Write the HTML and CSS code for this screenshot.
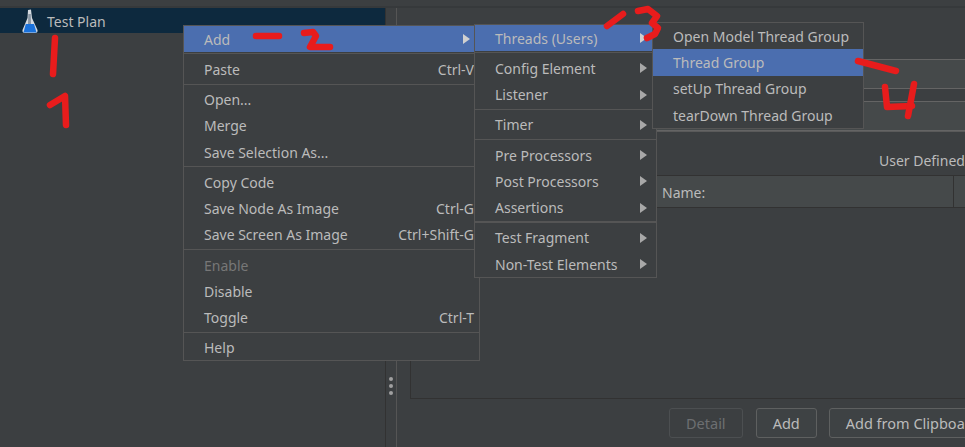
FILE: index.html
```html
<!DOCTYPE html>
<html lang="en">
<head>
  <meta charset="UTF-8">
  <title>Test Plan</title>
  <link rel="stylesheet" href="styles.css">
</head>
<body>

  <div class="topStrip"></div>

  <div class="app">
    <div class="treePane">
      <div class="treeRow">
        <svg class="flask" width="16" height="24" viewBox="0 0 16 24">
          <path d="M6 1 L9 0.5 L10 9 L15.5 21 Q16 24 13 24 L3 24 Q0 24 0.5 21 L5.5 9 Z" fill="#d5dae0"/>
          <path d="M3.8 15 L12 15 L14.5 23.5 L1.5 23.5 Z" fill="#1a72dc"/>
          <path d="M6.3 5 L8.8 5 L9 15 L6 15 Z" fill="#8a96a3"/>
        </svg>
        <span>Test Plan</span>
      </div>
    </div>

    <div class="splitter">
      <span class="dot"></span>
      <span class="dot"></span>
      <span class="dot"></span>
    </div>

    <div class="mainPane">
      <div class="fieldRow"></div>
      <div class="fieldRow second"></div>
      <div class="sectionLine"></div>
      <div class="tableBox">
        <div class="tableTitle">User Defined Variables</div>
        <div class="tableHead">
          <div class="nameCell">Name:</div>
          <div class="valueCell"></div>
        </div>
      </div>
      <div class="buttons">
        <button class="btn disabled">Detail</button>
        <button class="btn">Add</button>
        <button class="btn">Add from Clipboard</button>
      </div>
    </div>
  </div>

  <!-- Kontextmenue -->
  <div class="menu menuMain">
    <div class="item active"><span>Add</span><i class="arrow"></i></div>
    <div class="sep"></div>
    <div class="item"><span>Paste</span><em>Ctrl-V</em></div>
    <div class="sep"></div>
    <div class="item"><span>Open...</span></div>
    <div class="item"><span>Merge</span></div>
    <div class="item"><span>Save Selection As...</span></div>
    <div class="sep"></div>
    <div class="item"><span>Copy Code</span></div>
    <div class="item"><span>Save Node As Image</span><em>Ctrl-G</em></div>
    <div class="item"><span>Save Screen As Image</span><em>Ctrl+Shift-G</em></div>
    <div class="sep"></div>
    <div class="item off"><span>Enable</span></div>
    <div class="item"><span>Disable</span></div>
    <div class="item"><span>Toggle</span><em>Ctrl-T</em></div>
    <div class="sep"></div>
    <div class="item"><span>Help</span></div>
  </div>

  <div class="menu menuAdd">
    <div class="item active"><span>Threads (Users)</span><i class="arrow"></i></div>
    <div class="sep"></div>
    <div class="item"><span>Config Element</span><i class="arrow"></i></div>
    <div class="item"><span>Listener</span><i class="arrow"></i></div>
    <div class="sep"></div>
    <div class="item"><span>Timer</span><i class="arrow"></i></div>
    <div class="sep"></div>
    <div class="item"><span>Pre Processors</span><i class="arrow"></i></div>
    <div class="item"><span>Post Processors</span><i class="arrow"></i></div>
    <div class="item"><span>Assertions</span><i class="arrow"></i></div>
    <div class="sep thick"></div>
    <div class="item"><span>Test Fragment</span><i class="arrow"></i></div>
    <div class="item"><span>Non-Test Elements</span><i class="arrow"></i></div>
  </div>

  <div class="menu menuThreads">
    <div class="item"><span>Open Model Thread Group</span></div>
    <div class="item active"><span>Thread Group</span></div>
    <div class="item"><span>setUp Thread Group</span></div>
    <div class="item"><span>tearDown Thread Group</span></div>
  </div>

  <!-- rote Markierungen -->
  <svg class="marks" width="965" height="447" viewBox="0 0 965 447">
    <path d="M55 38 L53 74"/>
    <path d="M50 105 L65 96 L66 125"/>
    <path d="M256 36 L279 36"/>
    <path d="M304 33 L313 32 L316 36 L310 47 L330 47"/>
    <path d="M607 26 L623 14"/>
    <path d="M638 11 L648 9 L657 16 L652 23 L658 28 L655 34 L647 38"/>
    <path d="M858 61 L896 71"/>
    <path d="M885 87 L887 107 L912 106"/>
    <path d="M914 84 L908 116"/>
  </svg>

</body>
</html>
```

FILE: styles.css
```css
* {
  box-sizing: border-box;
}
html, body {
  margin: 0;
  height: 100%;
  overflow: hidden;
}
body {
  position: relative;
  background-color: #3c3f41;
  color: #bbbbbb;
  font-family: "Noto Sans", Arial, sans-serif;
  font-size: 14px;
}
.topStrip {
  height: 8px;
  border-bottom: 2px solid #36393b;
}
.app {
  display: flex;
  height: 439px;
}
.treePane {
  width: 385px;
}
.treeRow {
  display: flex;
  align-items: center;
  gap: 9px;
  height: 25px;
  padding: 1px 0 0 22px;
  background-color: #0d293e;
}
.flask {
  flex: none;
}
.splitter {
  display: flex;
  flex-direction: column;
  justify-content: flex-end;
  align-items: center;
  gap: 3px;
  width: 12px;
  padding-bottom: 52px;
  border-left: 1px solid #323232;
  border-right: 1px solid #555555;
}
.dot {
  width: 4px;
  height: 4px;
  border-radius: 50%;
  background-color: #a0a0a0;
}
.mainPane {
  flex: 1;
  min-width: 0;
  display: flex;
  flex-direction: column;
  padding: 51px 0 0 13px;
  overflow: hidden;
}
.fieldRow {
  height: 30px;
  margin-left: 200px;
  background-color: #45494a;
  border-top: 1px solid #646464;
  border-bottom: 1px solid #646464;
}
.fieldRow.second {
  margin-top: 12px;
}
.sectionLine {
  height: 1px;
  margin-top: -1px;
}
.tableBox {
  height: 268px;
  width: 700px;
  border-left: 1px solid #323232;
  border-bottom: 1px solid #323232;
  border-top: 1px solid #5a5a5a;
}
.tableTitle {
  height: 43px;
  padding-top: 19px;
  padding-left: 468px;
  white-space: nowrap;
}
.tableHead {
  display: flex;
  height: 33px;
  background-color: #45494a;
  border-top: 1px solid #323232;
  border-bottom: 1px solid #323232;
}
.nameCell {
  width: 543px;
  padding: 7px 0 0 251px;
  border-right: 1px solid #323232;
}
.valueCell {
  flex: 1;
}
.buttons {
  display: flex;
  gap: 12px;
  margin-top: 9px;
  padding-left: 259px;
}
.btn {
  flex: none;
  height: 30px;
  padding: 0 16px;
  background-color: #3e4244;
  border: 1px solid #5e6060;
  border-radius: 3px;
  color: #bbbbbb;
  font-family: inherit;
  font-size: 14.5px;
  white-space: nowrap;
}
.btn.disabled {
  margin-right: 1px;
  border-color: #4c4f51;
  color: #6d6f71;
  background-color: transparent;
}

.menu {
  position: absolute;
  background-color: #3c3f41;
  border: 1px solid #555555;
}
.menuMain {
  left: 183px;
  top: 25px;
  width: 297px;
  height: 336px;
}
.menuAdd {
  left: 474px;
  top: 24px;
  width: 183px;
  height: 254px;
}
.menuThreads {
  left: 652px;
  top: 22px;
  width: 212px;
  height: 107px;
}
.item {
  display: flex;
  align-items: center;
  justify-content: space-between;
  height: 26.25px;
  padding: 0 5px 0 20px;
  white-space: nowrap;
}
.menuThreads .item {
  height: 26.4px;
}
.item em {
  font-style: normal;
}
.item.active {
  background-color: #4b6eaf;
}
.item.off {
  color: #777777;
}
.sep {
  height: 1px;
  margin: 1px 0 2px;
  background-color: #555555;
}
.sep.thick {
  height: 2px;
  margin: 0 0 2px;
}
.arrow {
  width: 0;
  height: 0;
  margin-right: 4px;
  border-top: 5px solid transparent;
  border-bottom: 5px solid transparent;
  border-left: 7px solid #a8a8a8;
}
.active .arrow {
  border-left-color: #d0d0d0;
}

.marks {
  position: absolute;
  left: 0;
  top: 0;
}
.marks path {
  fill: none;
  stroke: #e81c1c;
  stroke-width: 6.5;
  stroke-linecap: round;
  stroke-linejoin: round;
}
```
